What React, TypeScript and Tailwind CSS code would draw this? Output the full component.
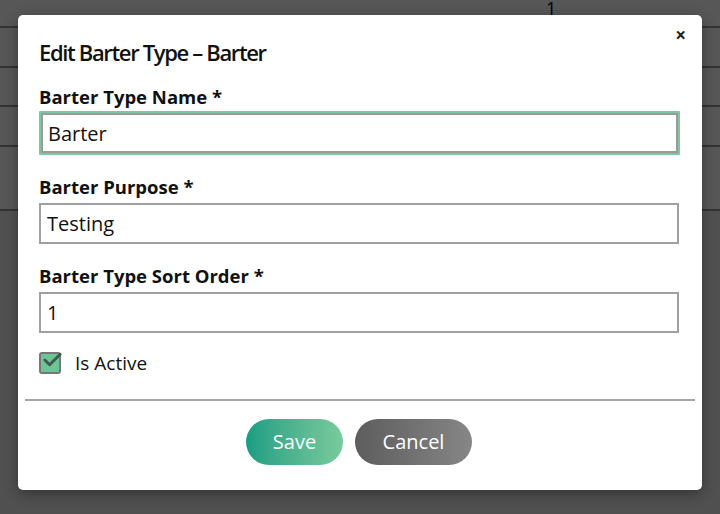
import { Check } from 'lucide-react'

const rows = [27, 67, 106, 146, 210]

export default function App() {
  return (
    <div
      className="relative w-[720px] h-[514px] overflow-hidden bg-[#505050]"
      style={{ fontFamily: '"Open Sans", "Noto Sans", sans-serif' }}
    >
      {/* page behind the overlay */}
      <div className="absolute inset-x-0 top-0 h-[210px] bg-[#575757]" />
      {rows.map((y) => (
        <div key={y} className="absolute inset-x-0 h-[2px] bg-[#333]" style={{ top: y - 1 }} />
      ))}
      <div className="absolute left-[546px] top-[-3px] text-[18px] leading-[22px] text-black">1</div>

      <div className="absolute left-[18px] top-[15px] w-[684px] h-[475px] bg-white rounded-[5px] shadow-[0_4px_14px_rgba(0,0,0,0.35)]">
        <button className="absolute right-[16px] top-[11px] text-[19px] font-bold leading-none text-[#222]">
          ×
        </button>
        <div className="px-[21px] pt-[22px]">
          <h2 className="text-[22px] font-semibold tracking-[-1.35px] text-[#111] leading-[30px]">
            Edit Barter Type – Barter
          </h2>

          <div className="mt-[18px] flex flex-col">
            <label className="text-[18.5px] font-bold text-[#111] leading-[24px]">Barter Type Name *</label>
            <div className="mt-[2px] w-[641px] h-[44px] border-[2px] border-[#7cc9a1] rounded-[1px]">
              <input
                className="w-full h-full border-[2px] border-[#9a9a9a] px-[5px] text-[20px] text-[#111] outline-none"
                defaultValue="Barter"
              />
            </div>

            <label className="mt-[20px] text-[18.5px] font-bold text-[#111] leading-[24px]">Barter Purpose *</label>
            <input
              className="mt-[4px] w-[640px] h-[41px] border-[2px] border-[#a0a0a0] px-[6px] text-[20px] text-[#111] outline-none"
              defaultValue="Testing"
            />

            <label className="mt-[20px] text-[18.5px] font-bold text-[#111] leading-[24px]">Barter Type Sort Order *</label>
            <input
              className="mt-[4px] w-[640px] h-[41px] border-[2px] border-[#a0a0a0] px-[6px] text-[20px] text-[#111] outline-none"
              defaultValue="1"
            />

            <div className="mt-[16px] flex items-center gap-[14px]">
              <div className="relative w-[22px] h-[22px] rounded-[3px] bg-[#6cc595] border-[2px] border-[#777]">
                <Check className="absolute left-[0px] top-[-7px] w-[23px] h-[26px] text-[#3f5a4c]" strokeWidth={3} />
              </div>
              <span className="text-[19px] text-[#111]">Is Active</span>
            </div>
          </div>
        </div>

        <div className="mx-[7px] mt-[21px] h-[2px] bg-[#a6a6a6]" />

        <div className="mt-[18px] flex justify-center gap-[12px] pr-[2px]">
          <button className="w-[97px] h-[46px] rounded-full bg-gradient-to-r from-[#159e83] to-[#78cb9c] text-white text-[20px]">
            Save
          </button>
          <button className="w-[117px] h-[46px] rounded-full bg-gradient-to-r from-[#5d5d5d] to-[#868686] text-white text-[20px]">
            Cancel
          </button>
        </div>
      </div>
    </div>
  )
}
